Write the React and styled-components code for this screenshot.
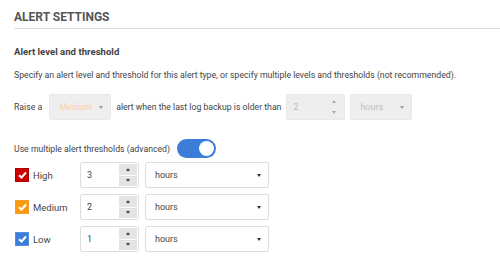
import React, { useState } from 'react'
import styled, { createGlobalStyle } from 'styled-components'

const GlobalStyle = createGlobalStyle`
  html, body {
    margin: 0;
    padding: 0;
    background: #fff;
  }
  body {
    font-family: Roboto, "Liberation Sans", sans-serif;
    color: #444;
  }
`;

const Page = styled.div`
  width: 500px;
  height: 272px;
  overflow: hidden;
`;

const Header = styled.h2`
  margin: 0 0 0 14px;
  padding: 9px 0 3px;
  font-size: 12px;
  line-height: 16px;
  font-weight: 700;
  color: #555;
  border-bottom: 1px solid #ddd;
`;

const Content = styled.div`
  padding: 0 14px;
`;

const SubHeading = styled.h3`
  margin: 16px 0 0;
  font-size: 9.6px;
  line-height: 14px;
  font-weight: 700;
  color: #444;
`;

const Description = styled.p`
  margin: 9px 0 0;
  font-size: 8.7px;
  line-height: 14px;
  color: #444;
`;

const RaiseRow = styled.div`
  display: flex;
  align-items: center;
  gap: 5px;
  margin-top: 12px;
  font-size: 8.7px;
  color: #444;
`;

const Select = styled.div`
  display: flex;
  align-items: center;
  justify-content: space-between;
  box-sizing: border-box;
  width: ${p => p.$width}px;
  height: 26px;
  padding: 0 7px 0 ${p => p.$pad || 9}px;
  border: 1px solid ${p => (p.$disabled ? '#e8e8e8' : '#ddd')};
  border-radius: 2px;
  background: ${p => (p.$disabled ? '#eeeeee' : '#fff')};
  color: ${p => p.$color || (p.$disabled ? '#bdbdbd' : '#444')};
  font-size: 9px;
`;

const Caret = styled.span`
  width: 0;
  height: 0;
  border-left: 2.5px solid transparent;
  border-right: 2.5px solid transparent;
  border-top: 3.5px solid ${p => (p.$disabled ? '#999' : '#333')};
`;

const NumberBox = styled.div`
  display: flex;
  box-sizing: border-box;
  width: 59px;
  height: 26px;
  border: 1px solid ${p => (p.$disabled ? '#e8e8e8' : '#ddd')};
  border-radius: 2px;
  background: ${p => (p.$disabled ? '#eeeeee' : '#fff')};
  color: ${p => (p.$disabled ? '#bdbdbd' : '#444')};
  font-size: 9px;
`;

const NumberValue = styled.span`
  flex: 1;
  display: flex;
  align-items: center;
  padding-left: 6px;
`;

const Spinner = styled.div`
  display: flex;
  flex-direction: column;
  gap: 1px;
  width: 18px;
  padding: 1px 1px 1px 0;
`;

const SpinButton = styled.span`
  flex: 1;
  display: flex;
  align-items: center;
  justify-content: center;
  background: ${p => (p.$disabled ? 'transparent' : '#e4e4e4')};
  &::after {
    content: '';
    width: 0;
    height: 0;
    border-left: 2.5px solid transparent;
    border-right: 2.5px solid transparent;
    ${p => (p.$up ? 'border-bottom' : 'border-top')}: 3.5px solid ${p => (p.$disabled ? '#aaa' : '#444')};
  }
`;

const ToggleRow = styled.div`
  display: flex;
  align-items: center;
  gap: 7px;
  margin-top: 19px;
  font-size: 8.7px;
  color: #444;
`;

const Toggle = styled.button`
  position: relative;
  width: 39px;
  height: 19px;
  padding: 0;
  border: none;
  border-radius: 10px;
  background: ${p => (p.$on ? '#3b7dd8' : '#ccc')};
  cursor: pointer;
  &::after {
    content: '';
    position: absolute;
    top: 2px;
    left: ${p => (p.$on ? '22px' : '2px')};
    width: 15px;
    height: 15px;
    border-radius: 50%;
    background: #fff;
  }
`;

const Thresholds = styled.div`
  display: flex;
  flex-direction: column;
  gap: 6px;
  margin-top: 4px;
`;

const ThresholdRow = styled.div`
  display: flex;
  align-items: center;
  gap: 6px;
`;

const Level = styled.label`
  display: flex;
  align-items: center;
  gap: 4px;
  width: 59px;
  padding-left: 1px;
  font-size: 9.5px;
  color: #444;
`;

const Check = styled.span`
  display: flex;
  align-items: center;
  justify-content: center;
  box-sizing: border-box;
  width: 14px;
  height: 14px;
  background: ${p => p.$color};
  border: 1px solid ${p => p.$border};
`;

function Tick() {
  return (
    <svg width="9" height="8" viewBox="0 0 9 8">
      <path d="M1 4.2 L3.5 6.5 L8 1.5" fill="none" stroke="#fff" strokeWidth="2" />
    </svg>
  )
}

function Spin({ disabled }) {
  return (
    <Spinner>
      <SpinButton $up $disabled={disabled} />
      <SpinButton $disabled={disabled} />
    </Spinner>
  )
}

const levels = [
  { name: 'High', value: 3, color: '#cc0000', border: '#a80000' },
  { name: 'Medium', value: 2, color: '#fb9c10', border: '#f0a030' },
  { name: 'Low', value: 1, color: '#3b7dd8', border: '#5590e0' },
];

export default function App() {
  const [multi, setMulti] = useState(true);
  return (
    <Page>
      <GlobalStyle />
      <Header>ALERT SETTINGS</Header>
      <Content>
        <SubHeading>Alert level and threshold</SubHeading>
        <Description>
          Specify an alert level and threshold for this alert type, or specify multiple levels and thresholds (not recommended).
        </Description>
        <RaiseRow>
          <span>Raise a</span>
          <Select $width={62} $disabled $color="#fdd2a0" style={{ marginLeft: 2 }}>
            Medium <Caret $disabled />
          </Select>
          <span>alert when the last log backup is older than</span>
          <NumberBox $disabled>
            <NumberValue>2</NumberValue>
            <Spin disabled />
          </NumberBox>
          <Select $width={62} $disabled>
            hours <Caret $disabled />
          </Select>
        </RaiseRow>
        <ToggleRow>
          <span>Use multiple alert thresholds (advanced)</span>
          <Toggle $on={multi} onClick={() => setMulti(!multi)} />
        </ToggleRow>
        <Thresholds>
          {levels.map(l => (
            <ThresholdRow key={l.name}>
              <Level>
                <Check $color={l.color} $border={l.border}><Tick /></Check>
                {l.name}
              </Level>
              <NumberBox>
                <NumberValue>{l.value}</NumberValue>
                <Spin />
              </NumberBox>
              <Select $width={124}>
                hours <Caret />
              </Select>
            </ThresholdRow>
          ))}
        </Thresholds>
      </Content>
    </Page>
  )
}
